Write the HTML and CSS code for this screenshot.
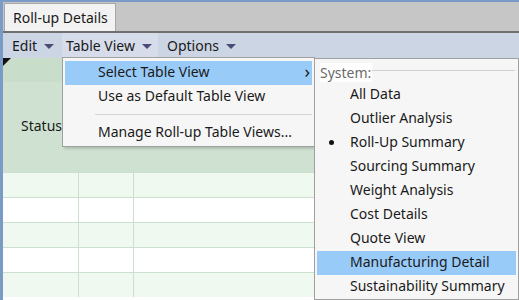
FILE: index.html
```html
<!DOCTYPE html>
<html lang="en">
<head>
    <meta charset="UTF-8">
    <title>Roll-up Details</title>
    <link rel="stylesheet" href="styles.css">
</head>
<body>

    <div class="window">

        <!-- Tab strip -->
        <div class="tabstrip">
            <div class="tab">Roll-up Details</div>
        </div>

        <!-- Menu bar -->
        <div class="menubar">
            <div class="menu-title">Edit <span class="caret"></span></div>
            <div class="menu-title open">Table View <span class="caret"></span></div>
            <div class="menu-title">Options <span class="caret"></span></div>
        </div>

        <!-- Roll-up grid -->
        <div class="grid">
            <div class="grid-head">
                <div class="corner"></div>
                <div class="head-top"></div>
                <div class="head-mid">
                    <div class="hcell col1">Status</div>
                    <div class="hcell col2"></div>
                    <div class="hcell col3"></div>
                </div>
                <div class="head-low">
                    <div class="hcell col1"></div>
                    <div class="hcell col2"></div>
                    <div class="hcell col3"></div>
                </div>
            </div>
            <div class="row alt"><div class="cell col1"></div><div class="cell col2"></div><div class="cell col3"></div></div>
            <div class="row"><div class="cell col1"></div><div class="cell col2"></div><div class="cell col3"></div></div>
            <div class="row alt"><div class="cell col1"></div><div class="cell col2"></div><div class="cell col3"></div></div>
            <div class="row"><div class="cell col1"></div><div class="cell col2"></div><div class="cell col3"></div></div>
            <div class="row alt"><div class="cell col1"></div><div class="cell col2"></div><div class="cell col3"></div></div>
        </div>

        <!-- Table View drop down -->
        <div class="dropdown table-menu">
            <div class="item active">Select Table View <span class="arrow">&#x203A;</span></div>
            <div class="item">Use as Default Table View</div>
            <div class="separator"></div>
            <div class="item">Manage Roll-up Table Views...</div>
        </div>

        <!-- Select Table View sub menu -->
        <div class="dropdown view-menu">
            <div class="group-label"><span>System:</span></div>
            <div class="item">All Data</div>
            <div class="item">Outlier Analysis</div>
            <div class="item checked">Roll-Up Summary</div>
            <div class="item">Sourcing Summary</div>
            <div class="item">Weight Analysis</div>
            <div class="item">Cost Details</div>
            <div class="item">Quote View</div>
            <div class="item active">Manufacturing Detail</div>
            <div class="item">Sustainability Summary</div>
        </div>

    </div>

</body>
</html>
```

FILE: styles.css
```css
body {
    margin: 0;
    width: 519px;
    height: 300px;
    overflow: hidden;
    font-family: "Noto Sans", "Open Sans", sans-serif;
    font-size: 14px;
    color: #1a1a1a;
    background: #fff;
}

.window {
    position: relative;
    height: 300px;
    border-left: 3px solid #7a9bc6;
    border-top: 2px solid #7a9bc6;
    box-sizing: border-box;
}

/* tab strip */
.tabstrip {
    height: 29px;
    background: #c6c6c6;
    border-bottom: 2px solid #6f6f6f;
    display: flex;
    align-items: flex-end;
    padding-left: 1px;
}

.tab {
    height: 28px;
    line-height: 27px;
    padding: 0 7px 0 8px;
    background: #f2f2f2;
    border: 1px solid #a7a7a7;
    border-bottom: none;
    box-sizing: border-box;
}

/* menu bar */
.menubar {
    height: 25px;
    background: #ccd5e4;
    display: flex;
}

.menu-title {
    padding: 0 6px 0 9px;
    line-height: 24px;
    display: flex;
    align-items: center;
    gap: 7px;
}

.menu-title.open {
    background: #d6dcea;
    padding-left: 4px;
    margin-left: 2px;
}

.caret {
    width: 0;
    height: 0;
    border-left: 5px solid transparent;
    border-right: 5px solid transparent;
    border-top: 5px solid #4b4b78;
    margin-top: 1px;
}

/* grid */
.grid-head {
    position: relative;
    background: #cfe2d1;
}

.corner {
    position: absolute;
    left: 0;
    top: 0;
    width: 0;
    height: 0;
    border-top: 8px solid #111;
    border-right: 8px solid transparent;
}

.head-top {
    height: 24px;
    background: #c9ddcb;
}

.head-mid,
.head-low,
.row {
    display: flex;
}

.head-mid {
    height: 68px;
}

.head-low {
    height: 22px;
}

.hcell {
    box-sizing: border-box;
}

.head-mid .col1 {
    padding: 34px 0 0 18px;
    line-height: 20px;
}

.head-low .hcell,
.cell {
    border-right: 1px solid #cde0cf;
}

.col1 { width: 76px; }
.col2 { width: 55px; }
.col3 { flex: 1; }

.row {
    height: 25px;
    border-top: 1px solid #cde0cf;
    box-sizing: border-box;
}

.row.alt {
    background: #f0f9f0;
}

.cell {
    box-sizing: border-box;
}

/* drop down menus */
.dropdown {
    position: absolute;
    background: #f6f6f6;
    border: 1px solid #a0a0a0;
    box-sizing: border-box;
    padding: 3px 2px;
}

.table-menu {
    left: 59px;
    top: 55px;
    width: 253px;
    height: 90px;
    box-shadow: 2px 2px 2px rgba(0, 0, 0, 0.15);
}

.view-menu {
    left: 311px;
    top: 56px;
    width: 205px;
    height: 242px;
}

.item {
    position: relative;
    height: 24px;
    line-height: 22px;
    padding-left: 33px;
    white-space: nowrap;
}

.item.active {
    background: #99cbf9;
}

.arrow {
    position: absolute;
    right: 2px;
    top: -1px;
    font-size: 18px;
}

.separator {
    height: 1px;
    margin: 5px 0 6px 30px;
    background: #d4d4d4;
}

.group-label {
    height: 21px;
    display: flex;
    align-items: center;
    margin-left: 3px;
    margin-right: 1px;
}

.group-label span {
    color: #6b6b6b;
    background: #fff;
    padding-right: 1px;
}

.group-label::after {
    content: "";
    flex: 1;
    height: 1px;
    background: #d0d0d0;
    margin-top: -4px;
}

.checked::before {
    content: "";
    position: absolute;
    left: 12px;
    top: 9px;
    width: 5px;
    height: 5px;
    border-radius: 50%;
    background: #111;
}
```
